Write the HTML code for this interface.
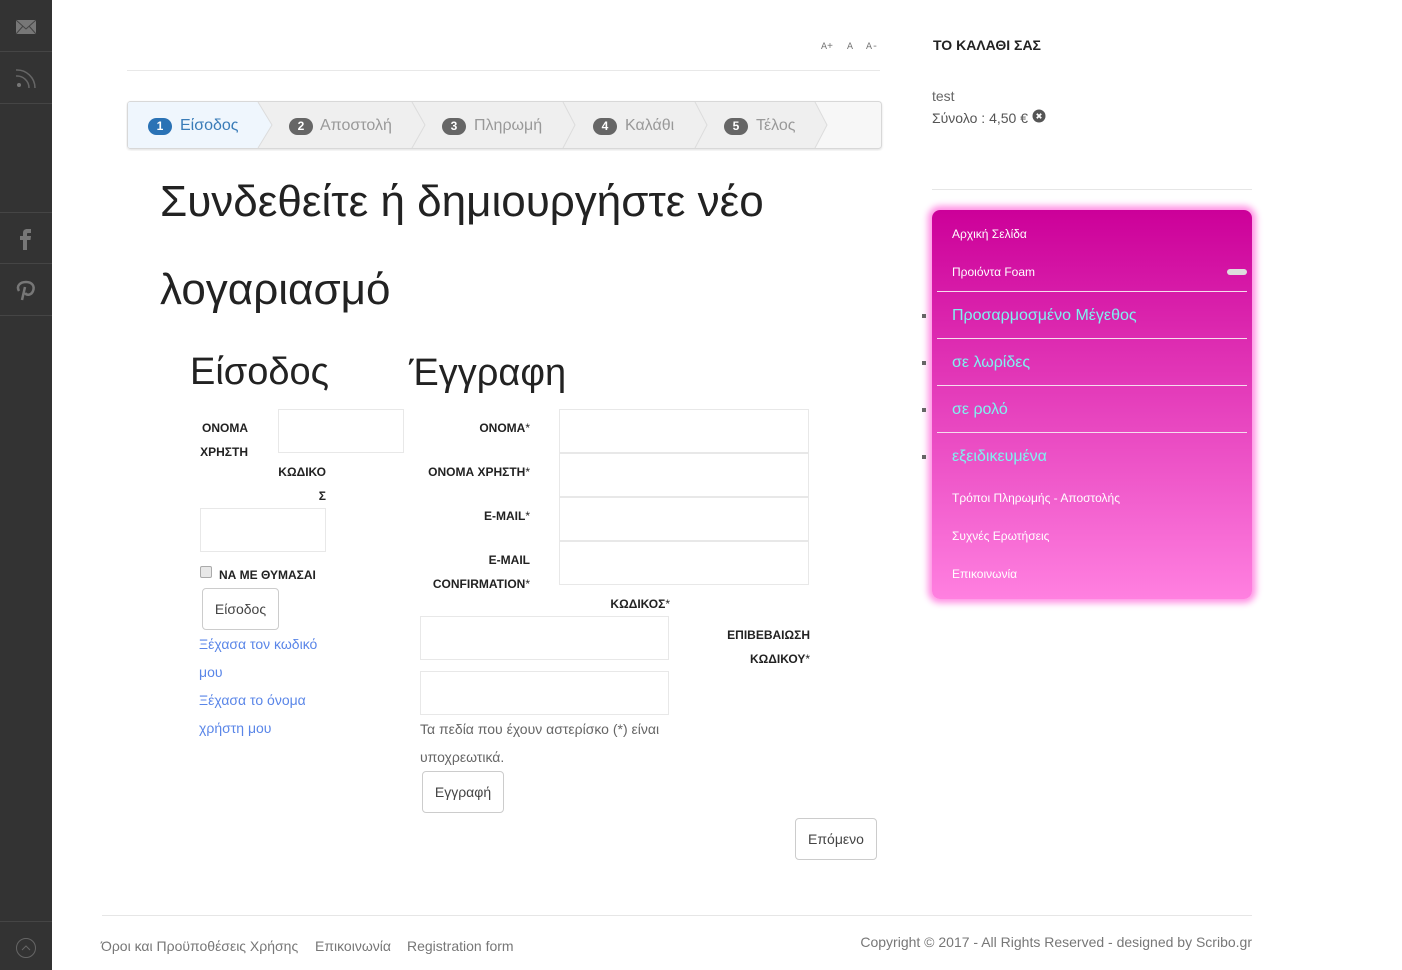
<!DOCTYPE html>
<html><head><meta charset="utf-8"><style>
html,body{margin:0;padding:0;background:#fff}
body{width:1402px;height:970px;position:relative;overflow:hidden;font-family:"Liberation Sans",Arial,sans-serif;color:#666}
.t{position:absolute;white-space:nowrap;line-height:20px}
.r{text-align:right}
.l{position:absolute;height:1px}
.sb{left:0;width:52px;background:#454545}
.lb{font-size:12px;font-weight:bold;color:#222;margin-top:1px}
.in{position:absolute;box-sizing:border-box;border:1px solid #e8e8e8;background:#fff}
.btn{position:absolute;box-sizing:border-box;border:1px solid #ccc;border-radius:4px;background:#fff;font-size:14px;color:#444;text-align:center;height:42px;line-height:40px}
.a{font-size:14px;color:#5a86e8}
.st{font-size:16px;color:#999}
.bd{position:absolute;width:24px;height:17px;border-radius:9px;background:#666;color:#fff;font-size:12px;font-weight:bold;text-align:center;line-height:17px}
.m1{font-size:12px;color:#fff}
.m2{font-size:16px;color:#7ff3f0;margin-top:1px}
.ml{position:absolute;left:937px;width:310px;height:1px;background:#f6dcee}
.dot{position:absolute;left:922px;width:4px;height:4px;background:#666}
.h1{font-size:44px;color:#222}
.h2{font-size:38px;color:#222}
.fs{font-size:10px;color:#777;font-family:"Liberation Mono",monospace}
</style></head><body>
<div style="position:absolute;left:0;top:0;width:52px;height:970px;background:#333"></div>
<div class="l sb" style="top:51px"></div><div class="l sb" style="top:103px"></div><div class="l sb" style="top:212px"></div><div class="l sb" style="top:263px"></div><div class="l sb" style="top:315px"></div><div class="l sb" style="top:921px"></div>
<svg style="position:absolute;left:0;top:0" width="52" height="970">
<rect x="16" y="20" width="20" height="14" fill="#777"/><path d="M16 20l10 9 10-9M16 34l7-8M36 34l-7-8" fill="none" stroke="#444" stroke-width="1"/>
<circle cx="19" cy="85" r="2" fill="#777"/><path d="M16 76a12 12 0 0 1 13 12M16 70a18 18 0 0 1 19 18" fill="none" stroke="#666" stroke-width="1.500"/>
<path d="M23 250v-10h-3v-4h3v-3c0-3 2-4 4-4h4v4h-3c-1 0-1 .5-1 1v2h4l-.5 4H27v10z" fill="#777"/>
<path d="M22 300l3-13M19 291c-3-5 1-9 7-9s9 4 7 9c-1.500 4-6 5-8 2" fill="none" stroke="#777" stroke-width="2.500"/>
<circle cx="26" cy="948" r="9.500" fill="none" stroke="#666" stroke-width="1"/><path d="M22 950l4-4 4 4" fill="none" stroke="#666"/>
</svg>

<div class="t fs" style="left:821px;top:38px">A+</div>
<div class="t fs" style="left:847px;top:38px">A</div>
<div class="t fs" style="left:866px;top:38px">A-</div>
<div class="l" style="left:127px;top:70px;width:753px;background:#e8e8e8"></div>

<svg style="position:absolute;left:126px;top:100px" width="758" height="51">
<defs><filter id="s" x="-2%" y="-10%" width="104%" height="130%"><feDropShadow dx="0" dy="1" stdDeviation="1" flood-color="#000" flood-opacity=".12"/></filter></defs>
<rect x="1.500" y="1.500" width="754" height="47" rx="3" fill="#f7f7f7" stroke="#d8d8d8" filter="url(#s)"/>
<path d="M689 2H569L581 25 569 48H689L701 25z" fill="#efefef"/>
<path d="M569 2H437L449 25 437 48H569L581 25z" fill="#efefef"/>
<path d="M437 2H286L299 25 286 48H437L449 25z" fill="#efefef"/>
<path d="M286 2H132L146 25 132 48H286L299 25z" fill="#efefef"/>
<path d="M4 2H132L146 25 132 48H4a2 2 0 0 1-2-2V4a2 2 0 0 1 2-2z" fill="#eff6fd"/>
<g fill="none" stroke="#dcdcdc" stroke-width="1"><path d="M132 2l14 23-14 23M286 2l13 23-13 23M437 2l12 23-12 23M569 2l12 23-12 23M689 2l12 23-12 23"/></g>
</svg>
<div class="bd" style="left:148px;top:118px;background:#2a72b5">1</div><div class="t st" style="left:180px;top:116px;color:#3a7cb8">Είσοδος</div>
<div class="bd" style="left:289px;top:118px">2</div><div class="t st" style="left:320px;top:116px">Αποστολή</div>
<div class="bd" style="left:442px;top:118px">3</div><div class="t st" style="left:474px;top:116px">Πληρωμή</div>
<div class="bd" style="left:593px;top:118px">4</div><div class="t st" style="left:625px;top:116px">Καλάθι</div>
<div class="bd" style="left:724px;top:118px">5</div><div class="t st" style="left:756px;top:116px">Τέλος</div>

<div class="t h1" style="left:160px;top:192px">Συνδεθείτε ή δημιουργήστε νέο</div>
<div class="t h1" style="left:160px;top:280px">λογαριασμό</div>
<div class="t h2" style="left:190px;top:362px">Είσοδος</div>
<div class="t h2" style="left:409px;top:363px">Έγγραφη</div>

<div class="t lb r" style="left:190px;width:58px;top:417px">ΟΝΟΜΑ</div>
<div class="t lb r" style="left:190px;width:58px;top:441px">ΧΡΗΣΤΗ</div>
<div class="in" style="left:278px;top:409px;width:126px;height:44px"></div>
<div class="t lb r" style="left:256px;width:70px;top:461px">ΚΩΔΙΚΟ</div>
<div class="t lb r" style="left:256px;width:70px;top:485px">Σ</div>
<div class="in" style="left:200px;top:508px;width:126px;height:44px"></div>
<div style="position:absolute;left:200px;top:566px;width:12px;height:12px;box-sizing:border-box;border:1px solid #aaa;border-radius:2px;background:#e8e8e8"></div>
<div class="t lb" style="left:219px;top:564px">ΝΑ ΜΕ ΘΥΜΑΣΑΙ</div>
<div class="btn" style="left:202px;top:588px;width:77px">Είσοδος</div>
<div class="t a" style="left:199px;top:634px">Ξέχασα τον κωδικό</div>
<div class="t a" style="left:199px;top:662px">μου</div>
<div class="t a" style="left:199px;top:690px">Ξέχασα το όνομα</div>
<div class="t a" style="left:199px;top:718px">χρήστη μου</div>

<div class="t lb r" style="left:400px;width:130px;top:417px">ΟΝΟΜΑ<span style="font-weight:normal">*</span></div>
<div class="in" style="left:559px;top:409px;width:250px;height:44px"></div>
<div class="t lb r" style="left:400px;width:130px;top:461px">ΟΝΟΜΑ ΧΡΗΣΤΗ<span style="font-weight:normal">*</span></div>
<div class="in" style="left:559px;top:453px;width:250px;height:44px"></div>
<div class="t lb r" style="left:400px;width:130px;top:505px">E-MAIL<span style="font-weight:normal">*</span></div>
<div class="in" style="left:559px;top:497px;width:250px;height:44px"></div>
<div class="t lb r" style="left:400px;width:130px;top:549px">E-MAIL</div>
<div class="t lb r" style="left:400px;width:130px;top:573px">CONFIRMATION<span style="font-weight:normal">*</span></div>
<div class="in" style="left:559px;top:541px;width:250px;height:44px"></div>
<div class="t lb r" style="left:540px;width:130px;top:593px">ΚΩΔΙΚΟΣ<span style="font-weight:normal">*</span></div>
<div class="in" style="left:420px;top:616px;width:249px;height:44px"></div>
<div class="t lb r" style="left:680px;width:130px;top:624px">ΕΠΙΒΕΒΑΙΩΣΗ</div>
<div class="t lb r" style="left:680px;width:130px;top:648px">ΚΩΔΙΚΟΥ<span style="font-weight:normal">*</span></div>
<div class="in" style="left:420px;top:671px;width:249px;height:44px"></div>
<div class="t" style="left:420px;top:719px;font-size:14px">Τα πεδία που έχουν αστερίσκο (*) είναι</div>
<div class="t" style="left:420px;top:747px;font-size:14px">υποχρεωτικά.</div>
<div class="btn" style="left:422px;top:771px;width:82px">Εγγραφή</div>
<div class="btn" style="left:795px;top:818px;width:82px">Επόμενο</div>

<div class="t" style="left:933px;top:35px;font-size:14px;font-weight:bold;color:#222">ΤΟ ΚΑΛΑΘΙ ΣΑΣ</div>
<div class="t" style="left:932px;top:86px;font-size:14px">test</div>
<div class="t" style="left:932px;top:108px;font-size:14px;color:#555">Σύνολο : 4,50 €</div>
<svg style="position:absolute;left:1032px;top:109px" width="14" height="14"><circle cx="7" cy="7" r="6.500" fill="#555"/><path d="M4.800 4.800l4.400 4.400M9.200 4.800l-4.400 4.400" stroke="#fff" stroke-width="1.800"/></svg>
<div class="l" style="left:932px;top:189px;width:320px;background:#e6e6e6"></div>

<div style="position:absolute;left:932px;top:210px;width:320px;height:389px;border-radius:8px;background:linear-gradient(#cc0099,#ff80e0);box-shadow:0 0 7px 4px #ff90e4"></div>
<div class="t m1" style="left:952px;top:224px">Αρχική Σελίδα</div>
<div class="t m1" style="left:952px;top:262px">Προιόντα Foam</div>
<div style="position:absolute;left:1227px;top:269px;width:20px;height:6px;border-radius:3px;background:#ddd"></div>
<div class="ml" style="top:291px"></div>
<div class="t m2" style="left:952px;top:305px">Προσαρμοσμένο Μέγεθος</div>
<div class="ml" style="top:338px"></div>
<div class="t m2" style="left:952px;top:352px">σε λωρίδες</div>
<div class="ml" style="top:385px"></div>
<div class="t m2" style="left:952px;top:399px">σε ρολό</div>
<div class="ml" style="top:432px"></div>
<div class="t m2" style="left:952px;top:446px">εξειδικευμένα</div>
<div class="dot" style="top:314px"></div><div class="dot" style="top:361px"></div><div class="dot" style="top:408px"></div><div class="dot" style="top:455px"></div>
<div class="t m1" style="left:952px;top:488px">Τρόποι Πληρωμής - Αποστολής</div>
<div class="t m1" style="left:952px;top:526px">Συχνές Ερωτήσεις</div>
<div class="t m1" style="left:952px;top:564px">Επικοινωνία</div>

<div class="l" style="left:102px;top:915px;width:1150px;background:#e6e6e6"></div>
<div class="t" style="left:101px;top:936px;font-size:14px;color:#777">Όροι και Προϋποθέσεις Χρήσης</div>
<div class="t" style="left:315px;top:936px;font-size:14px;color:#777">Επικοινωνία</div>
<div class="t" style="left:407px;top:936px;font-size:14px;color:#777">Registration form</div>
<div class="t r" style="left:752px;width:500px;top:932px;font-size:14px;color:#777">Copyright © 2017 - All Rights Reserved - designed by Scribo.gr</div>
</body></html>
